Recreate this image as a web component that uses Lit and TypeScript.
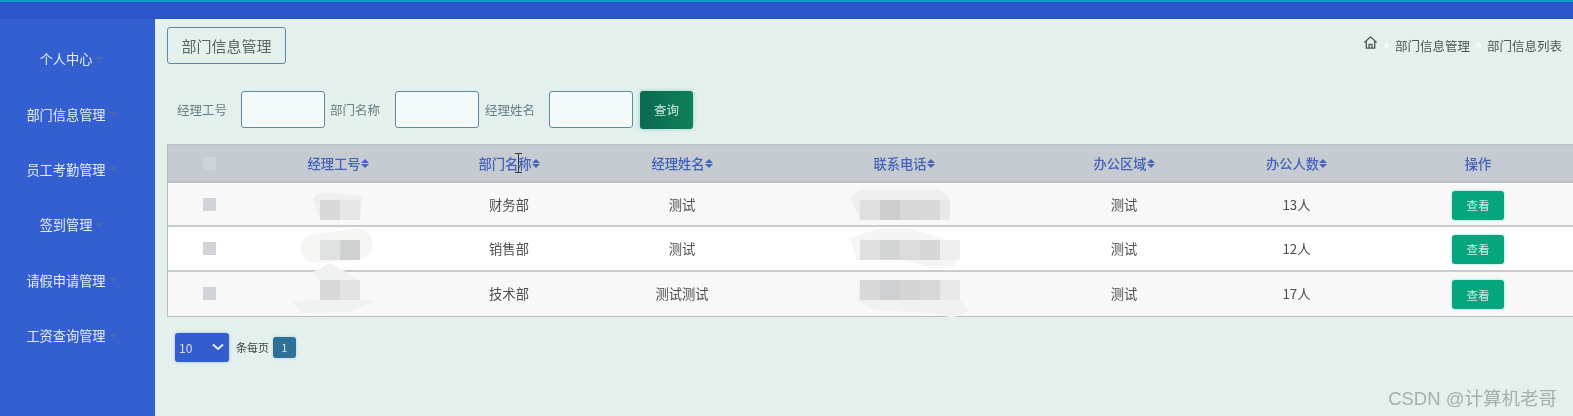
import { LitElement, html, css, svg } from "lit";
import { customElement } from "lit/decorators.js";

const menu = ["个人中心", "部门信息管理", "员工考勤管理", "签到管理", "请假申请管理", "工资查询管理"];
const heads = ["经理工号", "部门名称", "经理姓名", "联系电话", "办公区域", "办公人数"];
const rows = [
  { dept: "财务部", name: "测试", area: "测试", count: "13人" },
  { dept: "销售部", name: "测试", area: "测试", count: "12人" },
  { dept: "技术部", name: "测试测试", area: "测试", count: "17人" },
];

const blobs = [
  { fill: "#efefef", d: "M313 198 Q318 193 327 193 L357 195 Q362 196 362 200 L360 220 L320 220Z" },
  { fill: "#f6f6f4", d: "M300 247 Q302 238 310 235 L357 228 Q370 230 372 237 L372 250 Q368 258 357 260 L317 263 Q305 262 303 257Z" },
  { fill: "#f0f2f2", d: "M313 272 L330 263 L360 280 L360 300 L375 301 L350 312 L300 313 L293 301 L320 300 L320 280Z" },
  { fill: "#eeeeee", d: "M850 198 L860 190 L940 190 Q950 195 950 205 Q950 215 940 220 L860 220Z" },
  { fill: "#f5f5f5", d: "M850 238 L880 228 L910 228 L940 238 L957 243 L960 257 L953 267 L933 268 L903 260 L880 260 L857 260Z" },
  { fill: "#f1f1f1", d: "M860 280 L940 280 L960 288 L960 300 L970 310 L953 318 L933 313 L873 310 L857 300Z" },
];

const mosaics = [
  { x: 320, y: 200, colors: ["#d9d9d9", "#e6e8e8"] },
  { x: 320, y: 240, colors: ["#e0e2e2", "#cfd1d1"] },
  { x: 320, y: 280, colors: ["#d8d8d8", "#e2e4e4"] },
  { x: 860, y: 200, colors: ["#e0dfdf", "#cdcdcd", "#d8d8d8", "#d9d9d9"] },
  { x: 860, y: 240, colors: ["#e0e0e0", "#d4d6d6", "#dcdcda", "#d6d8d8"] },
  { x: 860, y: 280, colors: ["#d8d8d8", "#cfd0d2", "#d5d5d5", "#d8d8d8"] },
];

@customElement("app-root")
export class AppRoot extends LitElement {
  static styles = css`
    :host {
      display: block;
      width: 1573px;
      height: 416px;
      overflow: hidden;
      font-family: "Noto Sans CJK SC", "Noto Sans", sans-serif;
      font-size: 13px;
    }
    * { box-sizing: border-box; }
    .page {
      position: relative;
      width: 1573px;
      height: 416px;
      background: #335cce;
      border-top: 2px solid #0f9cc4;
      display: grid;
      grid-template-columns: 155px 1fr;
      grid-template-rows: 17px 1fr;
      filter: blur(0.5px);
    }
    .top { grid-column: 1 / 3; background: #2b55c8; }
    .side {
      padding-top: 12px;
      display: flex;
      flex-direction: column;
      background: #345fd0;
    }
    .item {
      height: 55.4px;
      display: flex;
      align-items: center;
      justify-content: center;
      gap: 3px;
      padding-right: 12px;
      color: #e6ecf9;
      font-size: 13.2px;
      line-height: 55px;
    }
    .caret {
      width: 0;
      height: 0;
      border-left: 4px solid transparent;
      border-right: 4px solid transparent;
      border-top: 4px solid #4a69ae;
    }
    .main {
      background: #e3f0eb;
      padding: 7px 0 0 12px;
      min-width: 0;
      display: flex;
      flex-direction: column;
      position: relative;
    }
    .head {
      display: flex;
      justify-content: space-between;
      align-items: center;
      height: 38px;
    }
    .title {
      width: 119px;
      height: 37px;
      border: 1.5px solid #5f8aa3;
      border-radius: 3px;
      display: flex;
      align-items: center;
      justify-content: center;
      font-size: 15px;
      color: #5c6563;
    }
    .crumbs {
      display: flex;
      align-items: center;
      padding-right: 11px;
      font-size: 12.5px;
      color: #4d5654;
    }
    .crumbs svg { margin-top: -5px; }
    .sep {
      width: 5px;
      height: 5px;
      margin: 0 6px;
      border-radius: 50%;
      background: #f4f9f8;
    }
    .search {
      margin-top: 27px;
      height: 37px;
      display: flex;
      align-items: center;
      font-size: 12.5px;
      color: #66808a;
    }
    .label { margin-left: 10px; width: 64px; }
    .label.next { margin-left: 5px; width: 65px; }
    .label.last { margin-left: 6px; width: 64px; }
    .box {
      width: 84px;
      height: 37px;
      border: 1.5px solid #5f8aa3;
      border-radius: 3px;
      background: #f4fafa;
    }
    .query {
      margin-left: 7px;
      width: 53px;
      height: 38px;
      border-radius: 3px;
      background: linear-gradient(90deg, #0a6a52, #0e8058);
      box-shadow: 0 0 4px #8fd0d0;
      color: #cfe7df;
      display: flex;
      align-items: center;
      justify-content: center;
      font-size: 12.5px;
    }
    .table {
      margin-top: 16px;
      border: 1px solid #b9bfbf;
      border-right: 0;
      display: grid;
      grid-template-columns: 101px 138px 204px 142px 287px 168px 177px 188px;
      grid-template-rows: 38px repeat(3, 44.3px);
    }
    .row { display: contents; }
    .cell {
      display: flex;
      align-items: center;
      justify-content: center;
      color: #4d4f50;
      border-bottom: 2px solid #c9cccc;
      background: #f8f8f8;
      font-size: 13.3px;
    }
    .cell:nth-child(8) { padding-right: 2px; }
    .row.white .cell { background: #fff; }
    .row.last .cell { border-bottom: 0; }
    .row.header .cell {
      background: #c5cbd0;
      color: #4463bb;
      font-weight: 500;
      border-bottom: 2px solid #b9bfc2;
    }
    .row.header .cell:nth-child(5) { padding-left: 15px; }
    .check { justify-content: flex-start; padding-left: 35px; }
    .tick { width: 13px; height: 13px; background: #d0d3d8; }
    .header .tick { background: #cfd4d8; }
    .sort { display: inline-flex; flex-direction: column; gap: 1px; }
    .sort i { width: 0; height: 0; border-left: 4px solid transparent; border-right: 4px solid transparent; }
    .sort i.up { border-bottom: 4px solid #4463bb; }
    .sort i.down { border-top: 4px solid #4463bb; }
    .view {
      width: 52px;
      height: 29px;
      margin-top: 2px;
      border-radius: 3px;
      background: #05a57e;
      box-shadow: 0 0 3px #7fe0d8;
      color: #d5efe7;
      font-size: 11.5px;
      display: flex;
      align-items: center;
      justify-content: center;
    }
    .smudges { position: absolute; left: 0; top: -2px; pointer-events: none; }
    .pager {
      margin: 16px 0 0 8px;
      display: flex;
      align-items: center;
      font-size: 11px;
      color: #3d4744;
    }
    .size {
      width: 54px;
      height: 29px;
      border-radius: 3px;
      background: #335cce;
      box-shadow: 0 0 3px #8fb4ee;
      color: #d6e0f7;
      display: flex;
      align-items: center;
      justify-content: space-between;
      padding: 0 4px;
      font-size: 12px;
    }
    .per { margin-left: 7px; }
    .num {
      margin-left: 4px;
      width: 23px;
      height: 21px;
      border-radius: 3px;
      background: #2f7196;
      box-shadow: 0 0 3px #a4d3e4;
      color: #d8ebf3;
      display: flex;
      align-items: center;
      justify-content: center;
      font-size: 10.5px;
    }
    .cursor { position: absolute; left: 360px; top: 134px; width: 7px; height: 20px; color: #33373c; }
    .mark {
      position: absolute;
      right: 16px;
      bottom: 5px;
      font-size: 18.5px;
      line-height: 24px;
      color: #a5afad;
      font-family: "Liberation Sans", "Noto Sans CJK SC", sans-serif;
    }
  `;

  private sort() {
    return html`<span class="sort"><i class="up"></i><i class="down"></i></span>`;
  }

  render() {
    return html`
      <div class="page">
        <div class="top"></div>
        <nav class="side">
          ${menu.map((m) => html`<div class="item">${m}<span class="caret"></span></div>`)}
        </nav>
        <main class="main">
          <div class="head">
            <div class="title">部门信息管理</div>
            <div class="crumbs">
              <svg width="15" height="15" viewBox="0 0 16 16" fill="none" stroke="#4d5654" stroke-width="1.4">
                <path d="M1.500 8 8 2l6.500 6M3.500 7v7h9V7M6.500 14v-4h3v4" />
              </svg>
              <span class="sep"></span><span>部门信息管理</span><span class="sep"></span><span>部门信息列表</span>
            </div>
          </div>
          <div class="search">
            <span class="label">经理工号</span><div class="box"></div>
            <span class="label next">部门名称</span><div class="box"></div>
            <span class="label last">经理姓名</span><div class="box"></div>
            <div class="query">查询</div>
          </div>
          <div class="table">
            <div class="row header">
              <div class="cell check"><span class="tick"></span></div>
              ${heads.map((h) => html`<div class="cell">${h}${this.sort()}</div>`)}
              <div class="cell">操作</div>
            </div>
            ${rows.map(
              (r, i) => html`
                <div class="row ${i === 1 ? "white" : ""} ${i === 2 ? "last" : ""}">
                  <div class="cell check"><span class="tick"></span></div>
                  <div class="cell"></div>
                  <div class="cell">${r.dept}</div>
                  <div class="cell">${r.name}</div>
                  <div class="cell"></div>
                  <div class="cell">${r.area}</div>
                  <div class="cell">${r.count}</div>
                  <div class="cell"><div class="view">查看</div></div>
                </div>
              `,
            )}
          </div>
          <div class="pager">
            <div class="size">
              <span>10</span>
              <svg width="14" height="10" viewBox="0 0 14 10" fill="none" stroke="#e8eefb" stroke-width="2"><path d="M2 2.500 7 7l5-4.500" /></svg>
            </div>
            <span class="per">条每页</span>
            <div class="num">1</div>
          </div>
          <svg class="cursor" viewBox="0 0 7 20" fill="none" stroke="currentColor" stroke-width="1">
            <path d="M0 .5h7M0 19.500h7M3.500 .5v19" />
          </svg>
          <div class="mark">CSDN @计算机老哥</div>
        </main>
        <svg class="smudges" width="1573" height="416" viewBox="0 0 1573 416">
          ${blobs.map((b) => svg`<path d=${b.d} fill=${b.fill} />`)}
          ${mosaics.map((m) =>
            m.colors.map(
              (c, i) =>
                svg`<rect x=${m.x + i * (m.colors.length === 2 ? 20 : 20)} y=${m.y} width="20" height="20" fill=${c} />`,
            ),
          )}
          <rect x="940" y="240" width="20" height="20" fill="#eeeeee" />
          <rect x="940" y="280" width="20" height="20" fill="#e9e9e9" />
          <rect x="940" y="200" width="10" height="20" fill="#e8e8e8" />
        </svg>
      </div>
    `;
  }
}
